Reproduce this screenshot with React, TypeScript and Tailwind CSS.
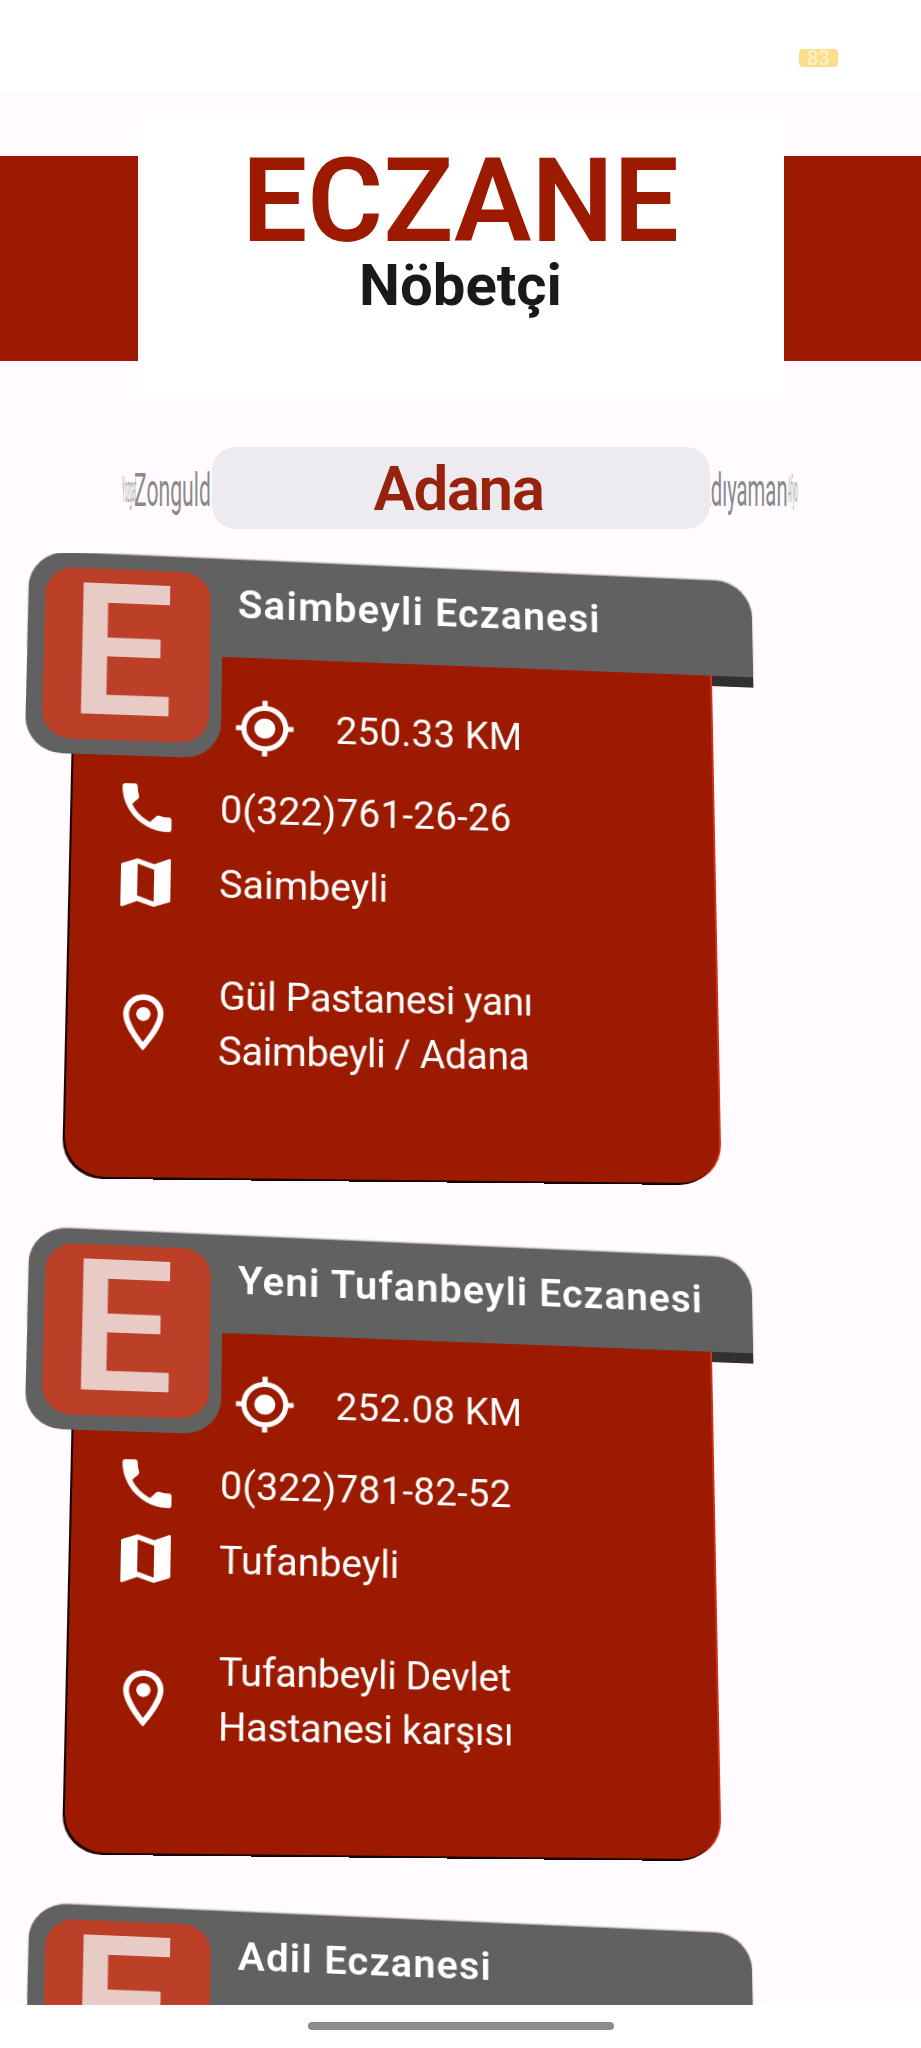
import { MdGpsFixed, MdMap, MdOutlineLocationOn, MdPhone } from "react-icons/md";

const pharmacies = [
  {
    name: "Saimbeyli Eczanesi",
    distance: "250.33 KM",
    phone: "0(322)761-26-26",
    district: "Saimbeyli",
    address: ["Gül Pastanesi yanı", "Saimbeyli / Adana"],
  },
  {
    name: "Yeni Tufanbeyli Eczanesi",
    distance: "252.08 KM",
    phone: "0(322)781-82-52",
    district: "Tufanbeyli",
    address: ["Tufanbeyli Devlet", "Hastanesi karşısı"],
  },
  {
    // only the header of this one is on screen
    name: "Adil Eczanesi",
    distance: "",
    phone: "",
    district: "",
    address: [],
  },
];

type Pharmacy = { name: string; distance: string; phone: string; district: string; address: string[] };

const PharmacyCard = ({ item }: { item: Pharmacy }) => {
  return (
    <div className="relative ml-[77px] mb-[56px] w-[640px] h-[620px] shrink-0 origin-top-left [transform:matrix3d(1.02397,0.0448,0,0.00005489,-0.02184,0.96579,0,-0.00006392,0,0,1,0,0,0,0,1)]">
      <div className="relative z-10 -ml-[46px] w-[729px] h-[101px] rounded-t-[38px] bg-[#616161] pl-[205px] pt-[19px] text-[40px] tracking-[0.03em] leading-[56px] font-semibold text-white shadow-[0_-1px_2px_#8a8a8a]">
        {item.name}
      </div>
      <div className="ml-[638px] w-[45px] h-[11px] bg-[#303030]" />
      <div className="-mt-[11px] ml-px flex h-[519px] w-[637px] flex-col rounded-b-[38px] bg-[#9b1a00] text-[38.5px] text-white shadow-[-2px_2px_0_#160300,2px_0_0_#d2301a]">
        <div className="ml-[155px] mt-[40px] flex h-16 items-center gap-[39px] tracking-[0.005em]">
          <MdGpsFixed size={62} />
          <span>{item.distance}</span>
        </div>
        <div className="ml-10 mt-5 flex h-16 items-center gap-[39px] tracking-[0.005em]">
          <MdPhone size={64} />
          <span>{item.phone}</span>
        </div>
        <div className="ml-10 mt-[11px] flex h-16 items-center gap-[39px]">
          <MdMap size={64} />
          <span>{item.district}</span>
        </div>
        <div className="ml-[39px] mt-[52px] flex items-center gap-[39px]">
          <MdOutlineLocationOn size={66} />
          <div className="leading-[54px] tracking-[-0.01em]">
            {item.address.map((line) => (
              <div key={line}>{line}</div>
            ))}
          </div>
        </div>
      </div>
      <div className="absolute -left-[46px] top-0 z-20 h-[205px] w-[190px] rounded-[36px] rounded-tr-none bg-[#616161] pb-[15px] pl-4 pr-3 pt-[15px]">
        <div className="flex h-full items-center justify-center overflow-hidden rounded-[28px] bg-[#bc3f28] pb-[6px] pr-[10px] font-semibold text-[188px] leading-none text-[#e9cbc5]">
          <span className="scale-x-[0.96]">E</span>
        </div>
      </div>
    </div>
  );
};

const App = () => {
  return (
    <div className="flex h-[2048px] w-[921px] flex-col overflow-hidden bg-[#fffbff] font-['Roboto',sans-serif]">
      <div className="flex h-[93px] shrink-0 justify-end bg-white pr-[83px] pt-[49px]">
        <div className="flex h-[18px] w-[39px] items-center justify-center rounded-sm bg-[#fbdd8b] text-[20px] leading-none text-[#fff3d0]">
          83
        </div>
      </div>

      <div className="mt-[25px] flex h-[280px] shrink-0 items-center">
        <div className="h-[205px] flex-1 bg-[#9b1a00]" />
        <div className="flex h-full w-[646px] flex-col items-center bg-white pt-6">
          <div className="text-[116px] leading-[118px] font-semibold text-[#9b1a00]">
            ECZANE
          </div>
          <div className="text-[58px] leading-[50px] font-bold text-[#1a1a1a]">
            Nöbetçi
          </div>
        </div>
        <div className="h-[205px] flex-1 bg-[#9b1a00]" />
      </div>

      <div className="mt-[49px] flex h-[82px] shrink-0 items-center pl-[122px]">
        <div className="flex h-full w-[90px] items-center overflow-hidden whitespace-nowrap pt-1 text-[46px] text-[#8a8a8a]">
          <span className="w-3 shrink-0 origin-left scale-x-[0.13] text-[36px] text-[#aaa]">
            Yozgat
          </span>
          <span className="shrink-0 origin-left scale-x-[0.46]">Zonguldak</span>
        </div>
        <div className="flex h-full w-[498px] items-center justify-center rounded-[24px] bg-[#eeebf0] pr-[5px] text-[62px] font-semibold tracking-tight text-[#97230f]">
          Adana
        </div>
        <div className="flex h-full w-[88px] items-center justify-end overflow-hidden whitespace-nowrap pt-1 text-[46px] text-[#8a8a8a]">
          <span className="shrink-0 origin-right scale-x-[0.44]">Adıyaman</span>
          <span className="w-[10px] shrink-0 origin-left scale-x-[0.13] text-[36px] text-[#aaa]">
            Afyon
          </span>
        </div>
      </div>

      <div className="mt-6 flex min-h-0 flex-1 flex-col overflow-hidden">
        {pharmacies.map((item) => (
          <PharmacyCard key={item.name} item={item} />
        ))}
      </div>

      <div className="flex h-[43px] shrink-0 justify-center bg-white pt-[17px]">
        <div className="h-2 w-[306px] rounded-full bg-[#8c8c8c]" />
      </div>
    </div>
  );
};

export default App;
